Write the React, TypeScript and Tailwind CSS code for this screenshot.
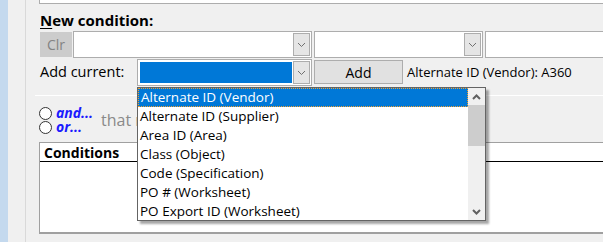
import React from 'react';

const Chevron = ({ up = false, bold = false }: { up?: boolean; bold?: boolean }) => (
  <svg width="9" height="6" viewBox="0 0 9 6" className="block">
    <path
      d={up ? 'M1 5 L4.5 1.5 L8 5' : 'M1 1 L4.5 4.5 L8 1'}
      fill="none"
      stroke={bold ? '#606060' : '#707070'}
      strokeWidth={bold ? 2 : 1}
    />
  </svg>
);

const Combo = ({ className = '', selected = false }: { className?: string; selected?: boolean }) => (
  <div className={`flex h-[27px] shrink-0 border border-[#adadad] bg-white p-px ${className}`}>
    <div className="flex-1 p-px">
      {selected && <div className="h-full bg-[#0078d7]" />}
    </div>
    <div className="flex w-[17px] items-center justify-center border border-[#adadad] bg-[#e5e5e5]">
      <Chevron />
    </div>
  </div>
);

const items = [
  'Alternate ID (Vendor)',
  'Alternate ID (Supplier)',
  'Area ID (Area)',
  'Class (Object)',
  'Code (Specification)',
  'PO # (Worksheet)',
  'PO Export ID (Worksheet)',
];

export default function App() {
  return (
    <div
      className="relative flex h-[242px] w-[603px] overflow-hidden bg-[#f0f0f0] text-[14px] text-black"
      style={{ fontFamily: '"Open Sans", "Noto Sans", sans-serif' }}
    >
      <div className="w-[8px] shrink-0 bg-[#c4d9ee]" />
      <div className="w-[17px] shrink-0" />
      <div className="flex min-w-0 flex-1 flex-col border-l border-[#d9d9d9] pl-[13px]">
        <div className="h-[4px] border-b border-l border-[#adadad] bg-white" />

        <div className="ml-px mt-[6px] h-[20px] text-[15px] font-bold leading-[20px]">
          <span className="underline underline-offset-2">N</span>ew condition:
        </div>

        <div className="mt-px flex h-[27px] items-start">
          <div className="ml-px mt-px flex h-[25px] w-[32px] shrink-0 items-center justify-center bg-[#cccccc] text-[#838383]">
            Clr
          </div>
          <Combo className="ml-px w-[239px]" />
          <Combo className="ml-[2px] w-[169px]" />
          <Combo className="ml-[2px] w-[160px]" />
        </div>

        <div className="mt-px flex h-[27px] items-start">
          <div className="ml-px w-[97px] shrink-0 pt-[3px] text-[14.5px] leading-[20px]">Add current:</div>
          <Combo className="w-[175px]" selected />
          <div className="ml-[2px] mt-px flex h-[24px] w-[89px] shrink-0 items-center justify-center border border-[#adadad] bg-[#e1e1e1]">
            Add
          </div>
          <div className="ml-[4px] whitespace-nowrap pt-[3px] text-[13px] leading-[20px]">Alternate ID (Vendor): A360</div>
        </div>

        <div className="ml-[-4px] mt-[9px] h-px bg-white" />

        <div className="mt-[10px] flex items-start">
          <div className="flex flex-col">
            <div className="flex h-[14px] items-center">
              <div className="h-[13px] w-[13px] rounded-full border border-[#333] bg-white" />
              <span className="ml-[4px] text-[14px] font-bold italic leading-[14px] text-[#1a1aff]">and...</span>
            </div>
            <div className="flex h-[14px] items-center">
              <div className="h-[13px] w-[13px] rounded-full border border-[#333] bg-white" />
              <span className="ml-[4px] text-[14px] font-bold italic leading-[14px] text-[#1a1aff]">or...</span>
            </div>
          </div>
          <div className="ml-[8px] mt-[5px] text-[16px] leading-[18px] text-[#8a8a8a]">that matches</div>
        </div>

        <div className="mt-[8px] flex h-[92px] flex-col border border-b-2 border-r-0 border-[#a0a0a0] bg-white">
          <div className="flex h-[19px] items-center border-b border-black pl-[4px] font-bold">Conditions</div>
        </div>
      </div>

      <div className="absolute left-[137px] top-[87px] flex h-[134px] w-[349px] border border-[#646464] bg-white text-[13.5px] shadow-[3px_3px_2px_rgba(0,0,0,0.35)]">
        <div className="flex flex-1 flex-col">
          {items.map((it, i) => (
            <div
              key={it}
              className={`flex h-[19px] items-center whitespace-nowrap pl-[2px] leading-[19px] ${
                i === 0 ? 'border border-dotted border-[#f0a030] bg-[#0078d7] text-white' : ''
              }`}
            >
              {it}
            </div>
          ))}
        </div>
        <div className="flex w-[17px] flex-col bg-[#f0f0f0]">
          <div className="flex h-[17px] items-center justify-center">
            <Chevron up bold />
          </div>
          <div className="h-[41px] bg-[#cdcdcd]" />
          <div className="flex-1" />
          <div className="flex h-[17px] items-center justify-center">
            <Chevron bold />
          </div>
        </div>
      </div>
    </div>
  );
}
